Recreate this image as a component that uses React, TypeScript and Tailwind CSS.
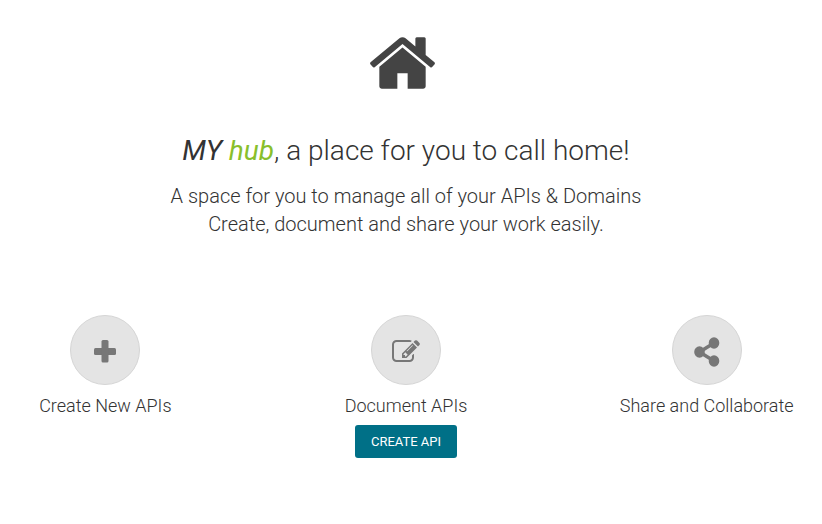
import type { ReactNode } from "react";

function HomeIcon() {
  return (
    <svg aria-hidden="true" viewBox="24 29 1616 1283" className="mr-[7px] h-[52px] w-[65px] fill-[#444444]">
      <path d="M1408 768v480q0 26-19 45t-45 19H960V928H704v384H320q-26 0-45-19t-19-45V768q0-1 .5-3t.5-3l575-474 575 474q1 2 1 6zm223-69l-62 74q-8 9-21 11h-3q-13 0-21-7L832 200 140 777q-12 8-24 7-13-2-21-11l-62-74q-8-10-7-23.500t11-21.500L756 55q32-26 76-26t76 26l244 204V64q0-14 9-23t23-9h192q14 0 23 9t9 23v408l219 182q10 8 11 21.500t-7 23.500z" />
    </svg>
  );
}

function PlusIcon() {
  return (
    <svg aria-hidden="true" viewBox="0 0 22 24" className="h-[24px] w-[22px] fill-[#777777]">
      <rect x="0" y="8" width="22" height="7" rx="1.5" />
      <rect x="7.5" y="0" width="7" height="22.500" rx="1.5" />
    </svg>
  );
}

function EditIcon() {
  return (
    <svg aria-hidden="true" viewBox="0 0 1792 1792" className="size-[28px] fill-[#777777]">
      <path d="M888 1184l116-116-152-152-116 116v56h96v96h56zm440-720q-16-16-33 1L945 815q-17 17-1 33t33-1l350-350q17-17 1-33zm80 594v190q0 119-84.500 203.500T1120 1536H288q-119 0-203.500-84.500T0 1248V416q0-119 84.500-203.500T288 128h832q63 0 117 25 15 7 18 23 3 17-9 29l-49 49q-14 14-32 8-23-6-45-6H288q-66 0-113 47t-47 113v832q0 66 47 113t113 47h832q66 0 113-47t47-113v-126q0-13 9-22l64-64q15-15 35-7t20 29zm-96-738l288 288-672 672H640V992zm444 132l-92 92-288-288 92-92q28-28 68-28t68 28l152 152q28 28 28 68t-28 68z" />
    </svg>
  );
}

function ShareIcon() {
  return (
    <svg aria-hidden="true" viewBox="0 0 26 30" className="h-[30px] w-[26px] fill-[#777777]">
      <path d="M20 6L5.500 15L20 24" className="fill-none stroke-[#777777] stroke-[3.5px]" />
      <ellipse cx="20" cy="6" rx="5.300" ry="5.700" />
      <ellipse cx="5.500" cy="15" rx="5.300" ry="5.700" />
      <ellipse cx="20" cy="24" rx="5.300" ry="5.700" />
    </svg>
  );
}

function Feature({ icon, label, children }: { icon: ReactNode; label: string; children?: ReactNode }) {
  return (
    <section className="flex flex-1 flex-col items-center">
      <div className="flex size-[70px] items-center justify-center rounded-full border border-[#d5d5d5] bg-[#e4e4e4] pt-1">
        {icon}
      </div>
      <h3 className="mt-2 text-lg leading-[26px] font-light whitespace-nowrap">{label}</h3>
      {children}
    </section>
  );
}

export default function App() {
  return (
    <main className="flex flex-col bg-white pt-[37px] pr-[10px] font-[Roboto,sans-serif] text-[#333333]">
      <header className="flex flex-col items-center text-center">
        <HomeIcon />
        <h1 className="mt-[42px] text-[28px] leading-10 font-light">
          <em className="font-normal">
            MY <span className="text-[#89bf2c]">hub</span>
          </em>
          , a place for you to call home!
        </h1>
        <p className="mt-[11px] text-xl leading-7 font-light">
          A space for you to manage all of your APIs &amp; Domains
          <br />
          Create, document and share your work easily.
        </p>
      </header>
      <div className="-mx-[45px] mt-[77px] flex">
        <Feature icon={<PlusIcon />} label="Create New APIs" />
        <Feature icon={<EditIcon />} label="Document APIs">
          <button
            type="button"
            className="mt-[6px] h-[33px] rounded-[3px] bg-[#007087] px-4 text-[13px] text-white"
          >
            CREATE API
          </button>
        </Feature>
        <Feature icon={<ShareIcon />} label="Share and Collaborate" />
      </div>
    </main>
  );
}
